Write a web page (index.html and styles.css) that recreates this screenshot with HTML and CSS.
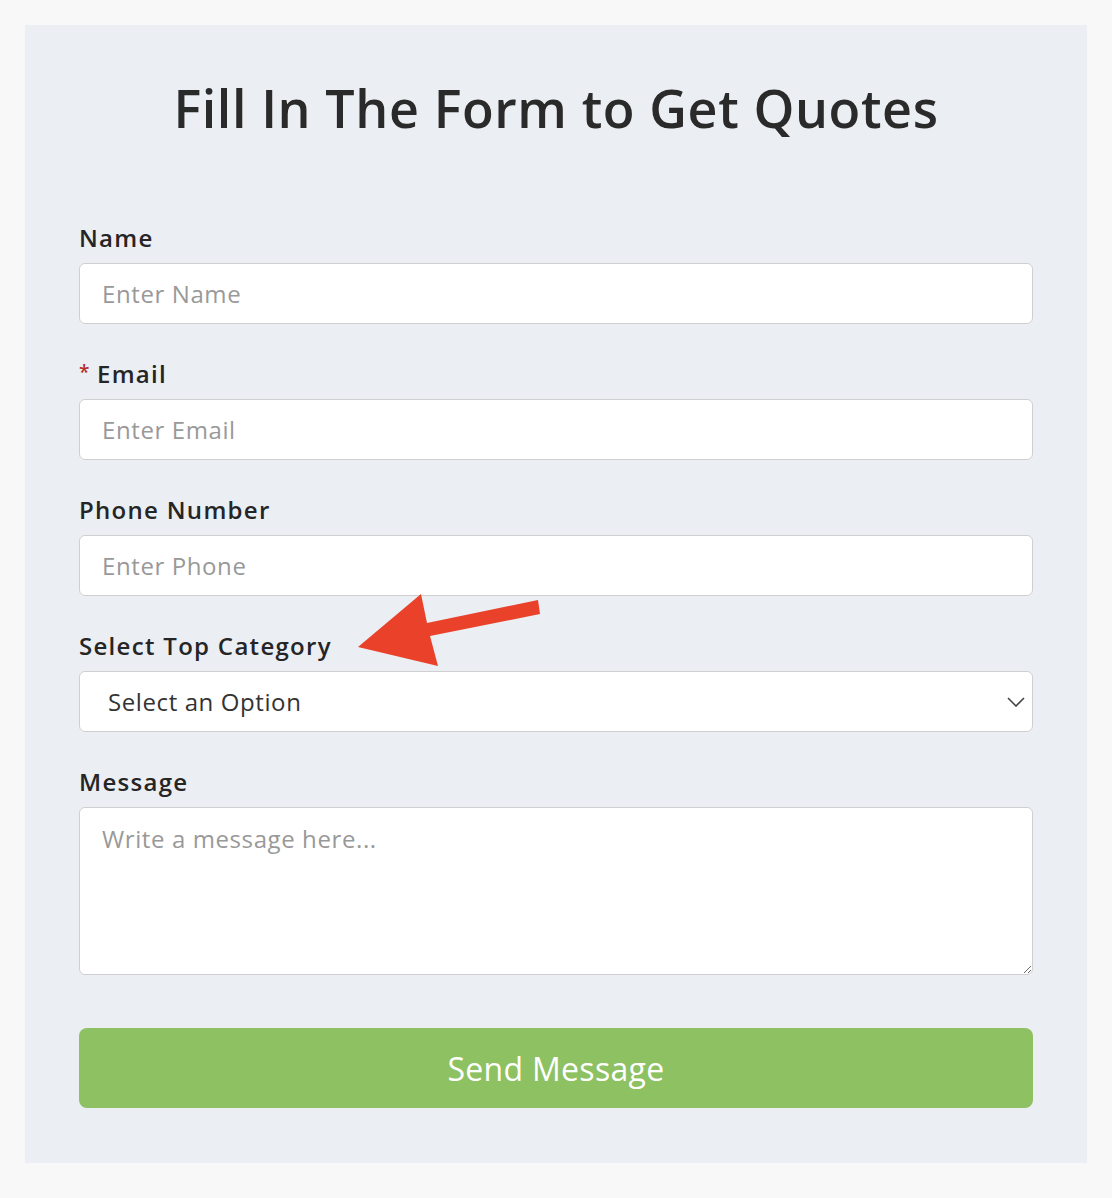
FILE: index.html
```html
<!DOCTYPE html>
<html lang="en">
<head>
<meta charset="utf-8">
<title>Get Quotes</title>
<link rel="stylesheet" href="styles.css">
</head>
<body>
<div class="page">
  <div class="card">
    <h1 class="title">Fill In The Form to Get Quotes</h1>
    <form class="form">
      <div class="group">
        <label class="label">Name</label>
        <input class="field" type="text" placeholder="Enter Name">
      </div>
      <div class="group">
        <label class="label"><span class="req">*</span> Email</label>
        <input class="field" type="text" placeholder="Enter Email">
      </div>
      <div class="group">
        <label class="label">Phone Number</label>
        <input class="field" type="text" placeholder="Enter Phone">
      </div>
      <div class="group group-select">
        <label class="label">Select Top Category</label>
        <div class="select-wrap">
          <select class="field select">
            <option>Select an Option</option>
          </select>
          <svg class="chevron" width="18" height="10" viewBox="0 0 18 10"><path d="M1 1 L9 9 L17 1" fill="none" stroke="#444" stroke-width="1.6"/></svg>
        </div>
        <svg class="arrow" width="200" height="90" viewBox="0 0 200 90"><polygon points="0,55 63,2 69,31 180,8 182,22 72,44 80,74" fill="#e9412a"/></svg>
      </div>
      <div class="group">
        <label class="label">Message</label>
        <textarea class="field area" placeholder="Write a message here..."></textarea>
      </div>
      <button class="btn" type="button">Send Message</button>
    </form>
  </div>
</div>
</body>
</html>
```
FILE: styles.css
```css
html, body {
  margin: 0;
  padding: 0;
  background: #f8f8f8;
}
body {
  font-family: "Open Sans", "Noto Sans", sans-serif;
  color: #222;
}
.page {
  padding: 25px;
}
.card {
  background: #ebeef3;
  padding: 50px 54px 55px;
}
.title {
  margin: 0;
  text-align: center;
  font-size: 52px;
  line-height: 66px;
  font-weight: 600;
  letter-spacing: 0.6px;
  color: #2a2a2a;
}
.form {
  margin-top: 82px;
  display: flex;
  flex-direction: column;
}
.group {
  display: flex;
  flex-direction: column;
  margin-bottom: 35px;
  position: relative;
}
.label {
  display: block;
  height: 30px;
  font-size: 24px;
  line-height: 30px;
  font-weight: 600;
  letter-spacing: 1.3px;
  margin-bottom: 10px;
  color: #252525;
}
.req {
  color: #b5302a;
  font-size: 19px;
  line-height: 0;
  letter-spacing: 0;
  position: relative;
  top: -4px;
}
.field {
  box-sizing: border-box;
  height: 61px;
  width: 100%;
  border: 1px solid #cfcfcf;
  border-radius: 6px;
  background: #fff;
  padding: 0 22px;
  font-family: inherit;
  font-size: 24px;
  letter-spacing: 0.6px;
  color: #333;
  outline: none;
}
.field::placeholder {
  color: #999;
}
.select-wrap {
  position: relative;
}
.select {
  appearance: none;
  -webkit-appearance: none;
  padding-left: 28px;
  color: #333;
}
.chevron {
  position: absolute;
  right: 8px;
  top: 26px;
}
.arrow {
  position: absolute;
  left: 279px;
  top: -39px;
}
.area {
  height: 168px;
  padding-top: 14px;
  resize: vertical;
}
.group:last-of-type {
  margin-bottom: 53px;
}
.btn {
  height: 80px;
  border: none;
  border-radius: 8px;
  background: #8dc161;
  color: #fff;
  font-family: inherit;
  font-size: 32px;
  letter-spacing: 0.3px;
  cursor: pointer;
}
```
